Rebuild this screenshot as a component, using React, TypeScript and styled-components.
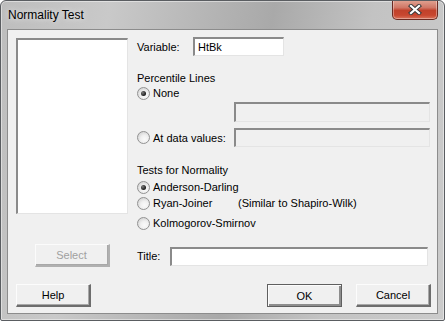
import styled, { createGlobalStyle } from 'styled-components'

const GlobalStyle = createGlobalStyle`
  html, body {
    margin: 0;
    padding: 0;
    background: #ffffff;
  }
  body {
    font-family: "Liberation Sans", Arial, sans-serif;
    font-size: 11px;
    color: #000;
  }
`

const Window = styled.div`
  width: 445px;
  height: 321px;
  box-sizing: border-box;
  border: 1px solid #5a5d61;
  border-radius: 6px 6px 2px 2px;
  box-shadow: inset 0 0 0 1px rgba(255, 255, 255, 0.45);
  background: linear-gradient(100deg, #bdbdbd 0%, #c9c9c9 22%, #b2b2b2 45%, #a9a9a9 55%, #c3c3c3 75%, #cbcbcb 100%);
  display: flex;
  flex-direction: column;
  overflow: hidden;
`

const TitleBar = styled.div`
  height: 28px;
  display: flex;
  align-items: flex-start;
  justify-content: space-between;
  padding-left: 7px;
  padding-right: 6px;
`

const Caption = styled.div`
  font-family: "Liberation Sans", Arial, sans-serif;
  font-size: 12px;
  line-height: 28px;
  color: #000;
  text-shadow: 0 0 6px rgba(255, 255, 255, 0.9);
`

const CloseButton = styled.div`
  width: 46px;
  height: 20px;
  margin-top: -1px;
  box-sizing: border-box;
  border: 1px solid #6b2a22;
  border-top: none;
  border-radius: 0 0 5px 5px;
  background: linear-gradient(180deg, #e2a594 0%, #d07766 40%, #c1412b 55%, #c8462f 80%, #d9735c 100%);
  box-shadow: inset 0 0 0 1px rgba(255, 255, 255, 0.35);
  display: flex;
  align-items: center;
  justify-content: center;
`

const Frame = styled.div`
  flex: 1;
  padding: 0 6px 6px 6px;
  display: flex;
`

const Client = styled.div`
  flex: 1;
  border: 1px solid #8c8c8c;
  background: #f0f0f0;
  padding: 7px 6px 5px 8px;
  display: flex;
  flex-direction: column;
`

const MainGrid = styled.div`
  display: grid;
  grid-template-columns: 112px 1fr;
  column-gap: 9px;
  row-gap: 14px;
`

const ListBox = styled.div`
  margin-top: 1px;
  height: 176px;
  box-sizing: border-box;
  background: #fff;
  border-style: solid;
  border-width: 2px 1px 1px 2px;
  border-color: #8a8a8a #e4e4e4 #e4e4e4 #8a8a8a;
`

const FormCol = styled.div`
  display: flex;
  flex-direction: column;
`

const Row = styled.div<{ $top: number; $h: number }>`
  display: flex;
  align-items: center;
  margin-top: ${p => p.$top}px;
  height: ${p => p.$h}px;
`

const Label = styled.span<{ $w?: number }>`
  display: inline-block;
  width: ${p => (p.$w ? `${p.$w}px` : 'auto')};
  white-space: nowrap;
  line-height: 14px;
`

const TextBox = styled.div<{ $w: number; $h?: number; $disabled?: boolean; $left?: number; $top?: number }>`
  width: ${p => p.$w}px;
  height: ${p => (p.$h ? `${p.$h}px` : '100%')};
  margin-left: ${p => p.$left ?? 0}px;
  margin-top: ${p => p.$top ?? 0}px;
  box-sizing: border-box;
  background: ${p => (p.$disabled ? '#f0f0f0' : '#fff')};
  border-style: solid;
  border-width: 2px 1px 1px 2px;
  border-color: #8a8a8a #e4e4e4 #e4e4e4 #8a8a8a;
  padding-left: 3px;
  display: flex;
  align-items: center;
  line-height: 14px;
`

const RadioItem = styled.label<{ $w?: number }>`
  display: flex;
  align-items: center;
  gap: 3px;
  width: ${p => (p.$w ? `${p.$w}px` : 'auto')};
  white-space: nowrap;
`

const Radio = styled.span<{ $checked?: boolean }>`
  position: relative;
  flex: none;
  width: 13px;
  height: 13px;
  box-sizing: border-box;
  border-radius: 50%;
  border: 1px solid #929292;
  background: radial-gradient(circle at 60% 65%, #fafafa 0%, #f0f0f0 40%, #d4d4d4 80%, #c8c8c8 100%);
  &::after {
    content: '';
    display: ${p => (p.$checked ? 'block' : 'none')};
    position: absolute;
    left: 3px;
    top: 3px;
    width: 5px;
    height: 5px;
    border-radius: 50%;
    background: radial-gradient(circle at 35% 35%, #7a7a7a 0%, #1a1a1a 70%);
  }
`

const BottomCell = styled.div<{ $center?: boolean }>`
  display: flex;
  align-items: center;
  justify-content: ${p => (p.$center ? 'center' : 'flex-start')};
  height: 23px;
`

const Button = styled.div<{ $default?: boolean; $disabled?: boolean }>`
  width: 75px;
  height: 23px;
  box-sizing: border-box;
  display: flex;
  align-items: center;
  justify-content: center;
  color: ${p => (p.$disabled ? '#a0a0a0' : '#000')};
  background: #f0f0f0;
  border-style: solid;
  border-width: ${p => (p.$default ? '1px' : '1px 2px 2px 1px')};
  border-color: ${p =>
    p.$default
      ? '#5f5f5f'
      : p.$disabled
      ? '#fbfbfb #b0b0b0 #b0b0b0 #fbfbfb'
      : '#fcfcfc #6d6d6d #6d6d6d #fcfcfc'};
  box-shadow: ${p =>
    p.$default ? 'inset 1px 1px 0 #fcfcfc, inset -2px -2px 0 #8d8d8d' : 'inset -1px -1px 0 #a8a8a8'};
`

const ButtonRow = styled.div`
  margin-top: 17px;
  display: flex;
  align-items: center;
`

const Spacer = styled.div`
  flex: 1;
`

const ButtonGap = styled.div`
  width: 14px;
`

export default function App() {
  return (
    <>
      <GlobalStyle />
      <Window>
        <TitleBar>
          <Caption>Normality Test</Caption>
          <CloseButton>
            <svg width="14" height="11" viewBox="0 0 14 11">
              <path d="M3 2 L11 9 M11 2 L3 9" stroke="#3b3b3b" strokeWidth="4.2" strokeLinecap="square" />
              <path d="M3 2 L11 9 M11 2 L3 9" stroke="#ffffff" strokeWidth="2.2" strokeLinecap="square" />
            </svg>
          </CloseButton>
        </TitleBar>
        <Frame>
          <Client>
            <MainGrid>
              <ListBox />
              <FormCol>
                <Row $top={0} $h={19}>
                  <Label $w={56}>Variable:</Label>
                  <TextBox $w={91}>HtBk</TextBox>
                </Row>
                <Row $top={15} $h={14}>
                  <Label>Percentile Lines</Label>
                </Row>
                <Row $top={1} $h={14}>
                  <RadioItem>
                    <Radio $checked />
                    None
                  </RadioItem>
                </Row>
                <Row $top={2} $h={20}>
                  <TextBox $w={196} $left={97} $disabled />
                </Row>
                <Row $top={6} $h={19}>
                  <RadioItem $w={97}>
                    <Radio />
                    At data values:
                  </RadioItem>
                  <TextBox $w={196} $disabled />
                </Row>
                <Row $top={16} $h={14}>
                  <Label>Tests for Normality</Label>
                </Row>
                <Row $top={3} $h={14}>
                  <RadioItem>
                    <Radio $checked />
                    Anderson-Darling
                  </RadioItem>
                </Row>
                <Row $top={2} $h={14}>
                  <RadioItem $w={101}>
                    <Radio />
                    Ryan-Joiner
                  </RadioItem>
                  <Label>(Similar to Shapiro-Wilk)</Label>
                </Row>
                <Row $top={6} $h={14}>
                  <RadioItem>
                    <Radio />
                    Kolmogorov-Smirnov
                  </RadioItem>
                </Row>
              </FormCol>
              <BottomCell $center>
                <Button $disabled>Select</Button>
              </BottomCell>
              <BottomCell>
                <Label $w={33}>Title:</Label>
                <TextBox $w={258} $h={19} $top={2} />
              </BottomCell>
            </MainGrid>
            <ButtonRow>
              <Button>Help</Button>
              <Spacer />
              <Button $default>OK</Button>
              <ButtonGap />
              <Button>Cancel</Button>
            </ButtonRow>
          </Client>
        </Frame>
      </Window>
    </>
  )
}
